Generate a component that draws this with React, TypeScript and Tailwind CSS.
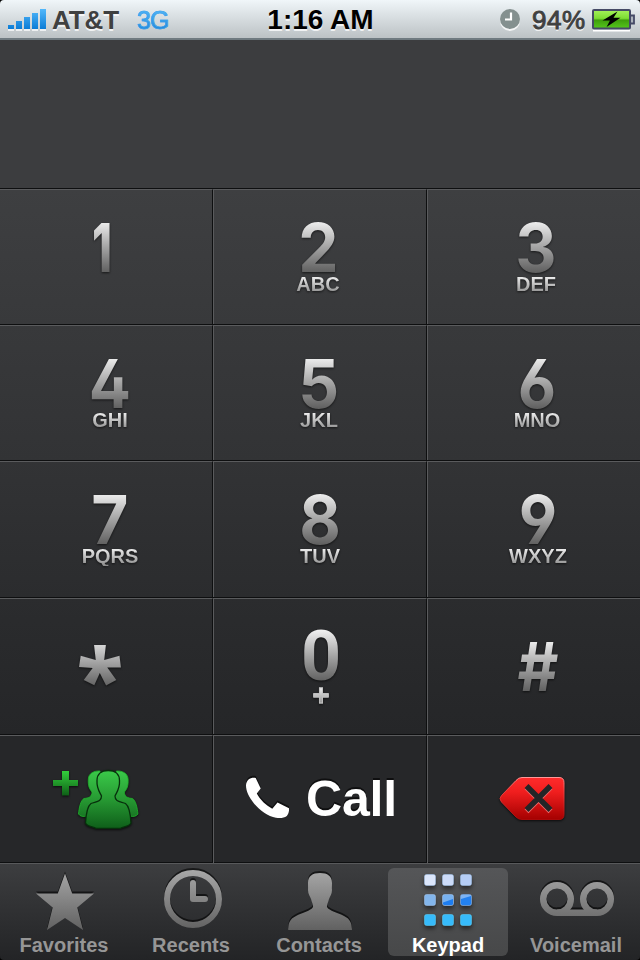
import type { ReactNode } from "react"
import clsx from "clsx"

type Key = {
  digit: string
  letters?: string
  digitClass?: string
  faceClass?: string
}

const inter = "font-['Inter',sans-serif] text-[68px] font-bold scale-x-[0.94]"
const openInter = "font-['Inter',sans-serif] text-[68px] font-bold scale-x-[0.92] [font-feature-settings:'ss01']"

const keyRows: { height: string; bg: string; keys: Key[] }[] = [
  {
    height: "h-[136px]",
    bg: "from-[#3e3f41] to-[#38393b]",
    keys: [
      {
        digit: "1",
        digitClass: "font-['Inter',sans-serif] text-[68px] font-extrabold scale-x-[0.67]",
        faceClass: "-translate-x-[4px]",
      },
      { digit: "2", letters: "ABC", digitClass: inter, faceClass: "-translate-x-[2px]" },
      { digit: "3", letters: "DEF", digitClass: inter, faceClass: "translate-x-[2px]" },
    ],
  },
  {
    height: "h-[136px]",
    bg: "from-[#38393b] to-[#323335]",
    keys: [
      { digit: "4", letters: "GHI", digitClass: openInter, faceClass: "translate-x-[4px]" },
      { digit: "5", letters: "JKL", digitClass: inter, faceClass: "-translate-x-[1px]" },
      { digit: "6", letters: "MNO", digitClass: openInter, faceClass: "translate-x-[3px]" },
    ],
  },
  {
    height: "h-[137px]",
    bg: "from-[#323335] to-[#2b2c2e]",
    keys: [
      { digit: "7", letters: "PQRS", digitClass: inter, faceClass: "translate-x-[4px]" },
      { digit: "8", letters: "TUV", digitClass: inter, faceClass: "translate-x-0" },
      { digit: "9", letters: "WXYZ", digitClass: openInter, faceClass: "translate-x-[4px]" },
    ],
  },
  {
    height: "h-[137px]",
    bg: "from-[#2b2c2e] to-[#252628]",
    keys: [
      {
        digit: "*",
        digitClass: "font-['Noto_Sans',sans-serif] text-[86px] font-extrabold leading-[84px]",
        faceClass: "-translate-x-[6px] translate-y-[6px]",
      },
      {
        digit: "0",
        letters: "+",
        digitClass: "font-['Roboto',sans-serif] text-[70px] font-bold",
        faceClass: "translate-x-[1px]",
      },
      {
        digit: "#",
        digitClass: "font-['Inter',sans-serif] text-[68px] font-bold scale-x-[0.93]",
        faceClass: "translate-x-[4px] translate-y-[10px]",
      },
    ],
  },
]

function KeyCell({ children }: { children?: ReactNode }) {
  return (
    <div className="flex h-full justify-center border-l border-r border-l-[#5a5b5d] border-r-[#0e0f10] border-t border-t-[#5a5b5d] first:border-l-0 last:border-r-0">
      {children}
    </div>
  )
}

function KeyFace({ digit, letters, digitClass, faceClass }: Key) {
  return (
    <div
      className={clsx(
        "flex flex-col items-center pt-[30px] drop-shadow-[0_1px_1px_rgba(0,0,0,0.6)]",
        faceClass,
      )}
    >
      <span
        className={clsx(
          "block h-[54px] bg-gradient-to-b from-[#f4f4f4] to-[#5c5c5c] bg-clip-text text-transparent",
          !digitClass?.includes("leading-") && "leading-[54px]",
          digitClass,
        )}
      >
        {digit}
      </span>
      {letters && (
        <span
          className={clsx(
            "block h-[20px] bg-gradient-to-b from-[#ffffff] to-[#8a8a8a] bg-clip-text font-['Liberation_Sans',Arial,sans-serif] font-bold leading-[20px] text-transparent",
            letters === "+" ? "mt-[2px] text-[29px] [-webkit-text-stroke:0.8px_#c4c4c4]" : "text-[20px]",
          )}
        >
          {letters}
        </span>
      )}
    </div>
  )
}

function StatusBar() {
  return (
    <header className="bg-black">
      <div className="flex h-[40px] rounded-t-[4px] border-b-2 border-[#6f7a80] bg-gradient-to-b from-[#f0f6f9] to-[#bcc2c5] font-['Liberation_Sans',Arial,sans-serif] [text-shadow:0_2px_0_rgba(255,255,255,0.75)]">
        <div className="flex w-[213px] items-start pl-[8px]">
          <svg className="mt-[9px] h-[22px] w-[40px]" viewBox="0 0 40 22">
            <defs>
              <linearGradient id="signal" x1="0" y1="0" x2="0" y2="20" gradientUnits="userSpaceOnUse">
                <stop offset="0" stopColor="#52b8fb" />
                <stop offset="1" stopColor="#0b7cd6" />
              </linearGradient>
            </defs>
            <path d="M0 18h6v4H0zM8 14h6v8H8zM16 10h6v12h-6zM24 6h6v16h-6zM32 2h6v20h-6z" fill="#fff" opacity="0.7" />
            <path d="M0 16h6v4H0zM8 12h6v8H8zM16 8h6v12h-6zM24 4h6v16h-6zM32 0h6v20h-6z" fill="url(#signal)" />
          </svg>
          <span className="ml-[4px] mt-[5px] w-[85px] text-[26px] font-bold leading-[30px] tracking-[-0.1px] text-[#3f4040]">
            AT&amp;T
          </span>
          <span className="mt-[5px] bg-gradient-to-b from-[#5cc0ff] to-[#0e7cd2] bg-clip-text text-[25px] leading-[30px] tracking-[-1px] text-transparent [-webkit-text-stroke:0.6px_#3aa2ec] [text-shadow:none]">
            3G
          </span>
        </div>
        <div className="flex-1 pl-[1px] pt-[4px] text-center text-[28px] font-bold leading-[31px] text-black">1:16 AM</div>
        <div className="flex w-[213px] items-start justify-end pr-[5px]">
          <svg className="mt-[8px] h-[24px] w-[22px]" viewBox="0 0 22 24">
            <circle cx="11" cy="13" r="10" fill="#fff" opacity="0.8" />
            <circle cx="11" cy="11" r="10" fill="#84908f" />
            <path d="M12 4.500V11.500H6" fill="none" stroke="#fff" strokeWidth="2.200" />
          </svg>
          <span className="ml-[11px] mt-[5px] w-[60px] text-[26px] leading-[30px] tracking-[0.5px] text-[#3f4040] [-webkit-text-stroke:0.9px_#3f4040]">
            94%
          </span>
          <svg className="mt-[8px] h-[24px] w-[43px]" viewBox="0 0 43 24">
            <defs>
              <linearGradient id="charge" x1="0" y1="0" x2="0" y2="1">
                <stop offset="0" stopColor="#a4f05a" />
                <stop offset="0.45" stopColor="#7ddc33" />
                <stop offset="0.55" stopColor="#3f9f0c" />
                <stop offset="1" stopColor="#55c81c" />
              </linearGradient>
            </defs>
            <path d="M1 22.500H38" stroke="#fff" strokeWidth="2" />
            <rect x="1" y="2" width="37" height="18.500" rx="1" fill="url(#charge)" stroke="#454a66" strokeWidth="2" />
            <path d="M39 7.500H42V15.500H39" fill="#aeb4bd" stroke="#454a66" strokeWidth="1.800" />
            <path d="M25.500 3.500L10.500 12.500H18L14.500 19L28.500 9.800H21.500Z" fill="#000" />
          </svg>
        </div>
      </div>
    </header>
  )
}

function AddContactIcon() {
  const side = (
    <path d="M100 771C94 770.500 88.500 773.500 88.300 779C87.800 786 89.500 789 92 792C92 797 88.500 798 84 798.500C80.500 800.500 79 808 78.500 814C80 816.500 83.500 817 86.500 816L104 800Z" />
  )
  return (
    <svg className="h-[127px] w-[212px]" viewBox="0 736 212 127">
      <defs>
        <linearGradient id="people" x1="0" y1="770" x2="0" y2="828" gradientUnits="userSpaceOnUse">
          <stop offset="0" stopColor="#3bcb4a" />
          <stop offset="0.5" stopColor="#279a33" />
          <stop offset="1" stopColor="#0f5f1a" />
        </linearGradient>
        <linearGradient id="plus" x1="0" y1="771" x2="0" y2="796" gradientUnits="userSpaceOnUse">
          <stop offset="0" stopColor="#33cf3c" />
          <stop offset="1" stopColor="#0e5c16" />
        </linearGradient>
      </defs>
      <g className="drop-shadow-[0_1px_1px_rgba(0,0,0,0.7)]">
        <path d="M62 771H69V780H78V786H69V795.500H62V786H53V780H62Z" fill="url(#plus)" />
        <g fill="url(#people)" stroke="#1fb52c" strokeWidth="0.800">
          {side}
          <g transform="matrix(-1 0 0 1 216.400 0)">{side}</g>
        </g>
        <path
          d="M108.200 770.500C101 770.500 97 774.500 97 780.500C96.500 788 99 791 101.500 796C101.500 802 96 801.500 91 803.500C87.500 806 86 815 85.500 823C87 826.500 92 826.500 96 828.300H120.500C124.500 826.500 129.500 826.500 131 823C130.500 815 129 806 125.500 803.500C120.500 801.500 115 802 115 796C117.500 791 120 788 119.500 780.500C119.500 774.500 115.500 770.500 108.200 770.500Z"
          fill="url(#people)"
          stroke="#07300c"
          strokeWidth="1.300"
        />
      </g>
    </svg>
  )
}

function DeleteIcon() {
  return (
    <svg className="h-[127px] w-[212px]" viewBox="428 736 212 127">
      <defs>
        <linearGradient id="delete" x1="0" y1="777" x2="0" y2="820" gradientUnits="userSpaceOnUse">
          <stop offset="0" stopColor="#ff2c2c" />
          <stop offset="0.35" stopColor="#f01e1e" />
          <stop offset="1" stopColor="#a30000" />
        </linearGradient>
        <linearGradient id="deleteEdge" x1="0" y1="777" x2="0" y2="820" gradientUnits="userSpaceOnUse">
          <stop offset="0" stopColor="#ff9a9a" />
          <stop offset="0.3" stopColor="#ee4a4a" />
          <stop offset="1" stopColor="#a80808" />
        </linearGradient>
      </defs>
      <path
        className="drop-shadow-[0_1px_1px_rgba(0,0,0,0.7)]"
        d="M522 777.500H559Q564 777.500 564 782.500V814.500Q564 819.500 559 819.500H522Q518.500 819.500 516 817L501.500 802Q498.500 798.500 501.500 795.500L516 780.500Q518.500 777.500 522 777.500Z"
        fill="url(#delete)"
        stroke="url(#deleteEdge)"
      />
      <path d="M526.500 787.300L550.500 811.300M550.500 787.300L526.500 811.300" stroke="#ee6a6a" strokeWidth="5.500" />
      <path d="M526.500 786L550.500 810M550.500 786L526.500 810" stroke="#242527" strokeWidth="5.500" />
    </svg>
  )
}

function ActionRow() {
  return (
    <div className="grid h-[128px] grid-cols-[213px_214px_213px] border-t border-[#0e0f10] bg-[#262729]">
      <KeyCell>
        <AddContactIcon />
      </KeyCell>
      <KeyCell>
        <div className="flex w-full items-start pl-[31px] pt-[32px] drop-shadow-[0_-2px_0_rgba(0,0,0,0.6)]">
          <svg className="mt-[9px] h-[42px] w-[44px]" viewBox="245 777 44 42">
            <path
              d="M248.500 779.500C250.500 777.600 254 777.300 255.700 778L260.700 788.500L256.800 793.500C260 799.500 266 805.500 272.300 808.700L277.500 802.500L289 808.300C289.300 811 288.500 814 286.800 816C284 818.200 280 818.300 276 817.800C268 816.500 260 810.500 254 803.500C249 797 246 791 246 785.500C246 783 247 781 248.500 779.500Z"
              fill="#fff"
            />
          </svg>
          <span className="ml-[17px] mt-[1px] font-['Liberation_Sans',Arial,sans-serif] text-[50px] font-bold leading-[60px] tracking-[-0.2px]">
            Call
          </span>
        </div>
      </KeyCell>
      <KeyCell>
        <DeleteIcon />
      </KeyCell>
    </div>
  )
}

const dots = [
  { x: 424, y: 874, fill: "#dbe6fb" },
  { x: 442, y: 874, fill: "#ccdbf8" },
  { x: 460, y: 874, fill: "#b5cdf5" },
  { x: 424, y: 894, fill: "#83b6ec" },
  { x: 442, y: 894, fill: "#78b2f0" },
  { x: 460, y: 894, fill: "#2381f0" },
  { x: 424, y: 914, fill: "#37bbfb" },
  { x: 442, y: 914, fill: "#37bbfb" },
  { x: 460, y: 914, fill: "#37bbfb" },
]

const tabs = [
  {
    label: "Favorites",
    viewBox: "0 868 128 64",
    icon: (
      <path
        d="M65 873.500L72.200 893.500H94L77.300 907.500L83 930L65 918L47 930L52.700 907.500L36 893.500H57.800Z"
        fill="url(#tabGrey)"
      />
    ),
  },
  {
    label: "Recents",
    viewBox: "128 868 128 64",
    labelClass: "-translate-x-[1px]",
    icon: (
      <g fill="none" stroke="url(#tabGrey)" strokeWidth="6">
        <circle cx="193" cy="899" r="26" />
        <path d="M193 883V899H205" strokeLinecap="round" strokeLinejoin="round" />
      </g>
    ),
  },
  {
    label: "Contacts",
    viewBox: "256 868 128 64",
    labelClass: "-translate-x-[1px]",
    icon: (
      <path
        d="M320 873C312.500 873 308 876 308 883C308 886 308.200 888 308 890C308 894 310 896 311 899C312 903 313.500 905 313 907C311 911 302 912.500 296 916C290 919 288.500 922 288.200 930H352C351.500 922 350 919 344 916C338 912.500 329 911 327 907C326.500 905 328 903 329 899C330 896 332 894 332 890C331.800 888 332 886 332 883C332 876 327.500 873 320 873Z"
        fill="url(#tabGrey)"
      />
    ),
  },
  {
    label: "Keypad",
    viewBox: "384 868 128 64",
    active: true,
    icon: (
      <>
        {dots.map((d) => (
          <rect
            key={`${d.x}-${d.y}`}
            x={d.x + 0.5}
            y={d.y + 0.5}
            width="11"
            height="11"
            rx="2"
            fill={d.fill}
            stroke={d.y === 914 ? "#5fd8ff" : "#a9cdf8"}
            strokeOpacity="0.5"
          />
        ))}
        {/* Glossy sweep across the middle row */}
        <path d="M443 902.500L453 899V903.500Q453 905 451.500 905H444.500Q443 905 443 903.500Z" fill="#1d7df0" />
        <path d="M461 895H471V896L461 899Z" fill="#7db4f5" />
      </>
    ),
  },
  {
    label: "Voicemail",
    viewBox: "512 868 128 64",
    icon: (
      <>
        <g fill="none" stroke="url(#tabGrey)" strokeWidth="6.500">
          <circle cx="557" cy="899" r="13.800" />
          <circle cx="597" cy="899" r="13.800" />
        </g>
        <rect x="557" y="909.500" width="40" height="6.500" fill="url(#tabGrey)" />
      </>
    ),
  },
]

function TabBar() {
  return (
    <nav className="bg-black">
      <div className="grid h-[98px] grid-cols-5 rounded-b-[4px] border-t border-[#0e0f10] bg-gradient-to-b from-[#3d3e40] to-[#232426] shadow-[inset_0_1px_0_#58595b]">
        {tabs.map((tab) => (
          <div
            key={tab.label}
            className={clsx(
              "mx-[4px] mb-[4px] mt-[5px] flex flex-col items-center rounded-[6px]",
              tab.active && "bg-gradient-to-b from-[#555658] to-[#474849]",
            )}
          >
            <svg
              className={clsx(
                "h-[64px] w-[128px] shrink-0",
                tab.active
                  ? "drop-shadow-[0_3px_2px_rgba(0,0,0,0.5)]"
                  : "drop-shadow-[0_-1.5px_0_rgba(0,0,0,0.6)]",
              )}
              viewBox={tab.viewBox}
            >
              <defs>
                <linearGradient id="tabGrey" x1="0" y1="870" x2="0" y2="930" gradientUnits="userSpaceOnUse">
                  <stop offset="0" stopColor="#a8a8a8" />
                  <stop offset="1" stopColor="#616161" />
                </linearGradient>
              </defs>
              {tab.icon}
            </svg>
            <span
              className={clsx(
                "mt-[2px] font-['Liberation_Sans',Arial,sans-serif] text-[20px] font-bold leading-[22px]",
                tab.active ? "text-white" : "text-[#969696]",
                tab.labelClass,
              )}
            >
              {tab.label}
            </span>
          </div>
        ))}
      </div>
    </nav>
  )
}

export default function App() {
  return (
    <main className="h-[960px] w-[640px] overflow-hidden bg-[#3b3c3e] text-white">
      <StatusBar />
      {/* Number display */}
      <div className="h-[148px] bg-[#3c3d3f]" />
      {keyRows.map((row) => (
        <div
          key={row.bg}
          className={clsx(
            "grid grid-cols-[213px_214px_213px] border-t border-[#0e0f10] bg-gradient-to-b",
            row.height,
            row.bg,
          )}
        >
          {row.keys.map((key) => (
            <KeyCell key={key.digit}>
              <KeyFace {...key} />
            </KeyCell>
          ))}
        </div>
      ))}
      <ActionRow />
      <TabBar />
    </main>
  )
}
